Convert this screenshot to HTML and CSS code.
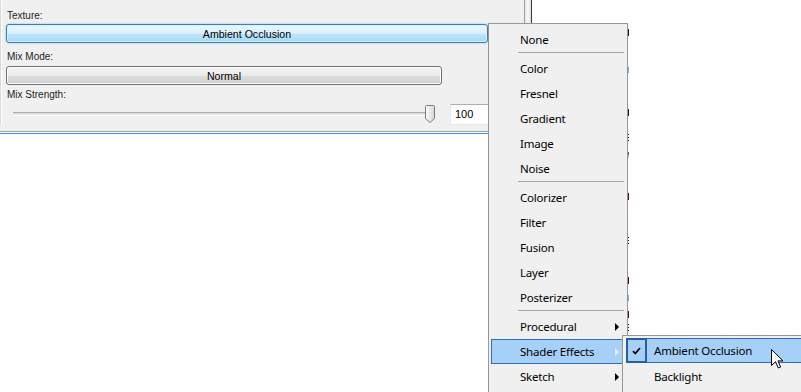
FILE: index.html
```html
<!DOCTYPE html>
<html lang="en">
<head>
  <meta charset="UTF-8">
  <title>Texture settings</title>
  <link rel="stylesheet" href="styles.css">
</head>
<body>
  <div class="top">
    <div class="panel">
      <div class="frame">
        <div class="label">Texture:</div>
        <button class="btn btn-focus">Ambient Occlusion</button>
        <div class="label label-gap">Mix Mode:</div>
        <button class="btn btn-normal">Normal</button>
        <div class="label">Mix Strength:</div>
        <div class="slider-row">
          <div class="slider">
            <div class="track"></div>
            <svg class="thumb" width="12" height="18" viewBox="0 0 12 18">
              <defs>
                <linearGradient id="tg" x1="0" y1="0" x2="1" y2="0">
                  <stop offset="0" stop-color="#fdfdfd"/>
                  <stop offset="1" stop-color="#d6d6d6"/>
                </linearGradient>
              </defs>
              <path d="M1.5 1.5 Q1.5 0.5 2.5 0.5 L9.5 0.5 Q10.5 0.5 10.5 1.5 L10.5 13.5 L6 17.5 L1.5 13.5 Z" fill="url(#tg)" stroke="#7a7a7a"/>
            </svg>
          </div>
          <div class="num">100</div>
        </div>
      </div>
    </div>
    <div class="strip"></div>
  </div>
  <div class="rule"></div>

  <div class="peek">
    <i class="red"></i><i class="blue"></i><i class="red"></i><i class="dots"></i><i class="mix"></i>
    <i class="red"></i><i class="dots"></i><i class="red"></i><i class="blue"></i><i class="red"></i><i class="dots"></i>
  </div>

  <div class="menu">
    <div class="item">None</div>
    <div class="sep"></div>
    <div class="item">Color</div>
    <div class="item">Fresnel</div>
    <div class="item">Gradient</div>
    <div class="item">Image</div>
    <div class="item">Noise</div>
    <div class="sep"></div>
    <div class="item">Colorizer</div>
    <div class="item">Filter</div>
    <div class="item">Fusion</div>
    <div class="item">Layer</div>
    <div class="item">Posterizer</div>
    <div class="sep"></div>
    <div class="item sub">Procedural</div>
    <div class="item sub active">Shader Effects</div>
    <div class="item sub">Sketch</div>
  </div>

  <div class="submenu">
    <div class="sub-item active">
      <span class="check">
        <svg width="9" height="8" viewBox="0 0 9 8"><path d="M1 4.2 L3.3 6.5 L8 1" fill="none" stroke="#000" stroke-width="1.7"/></svg>
      </span>
      Ambient Occlusion
    </div>
    <div class="sub-item"><span class="check blank"></span>Backlight</div>
  </div>

  <svg class="cursor" width="14" height="21" viewBox="0 0 14 21">
    <path d="M0.5 0.5 L0.5 16.5 L4.5 12.8 L7.3 19 L9.6 18 L6.9 11.9 L12 11.9 Z" fill="#fff" stroke="#000"/>
  </svg>
</body>
</html>
```

FILE: styles.css
```css
html,
body {
  margin: 0;
  width: 801px;
  height: 392px;
  overflow: hidden;
}

body {
  position: relative;
  background-color: #ffffff;
  font-family: 'Liberation Sans', Arial, sans-serif;
  color: #000000;
}

.top {
  display: flex;
  height: 131px;
}

.panel {
  width: 524px;
  background-color: #f0f0f0;
}

.frame {
  height: 125px;
  box-sizing: border-box;
  padding: 6px 0 0 6px;
  border-left: 1px solid #d9d9d9;
  box-shadow: inset 1px 0 #ffffff;
}

.label {
  font-size: 10px;
  line-height: 19px;
  height: 14px;
  color: #1e1e1e;
}

.label-gap {
  margin-top: 4px;
}

.btn {
  display: block;
  box-sizing: border-box;
  height: 19px;
  padding: 0;
  border-radius: 3px;
  font-family: 'Liberation Sans', Arial, sans-serif;
  font-size: 10.6px;
  color: #000000;
  text-align: center;
  margin-left: -1px;
}

.btn-focus {
  width: 482px;
  margin-top: 4px;
  border: 1px solid #3c7fb1;
  background: linear-gradient(#eaf6fd 0%, #d9f0fc 50%, #bee6fd 51%, #a7d9f5 100%);
  box-shadow: inset 0 0 0 1px #d6f0fb, 0 0 2px #6fb7e8;
}

.btn-normal {
  width: 436px;
  margin-top: 5px;
  border: 1px solid #707070;
  background: linear-gradient(#f2f2f2 0%, #ebebeb 50%, #dddddd 51%, #cfcfcf 100%);
  box-shadow: inset 0 0 0 1px #fcfcfc;
}

.slider-row {
  display: flex;
  margin-top: 4px;
  height: 22px;
}

.slider {
  position: relative;
  width: 431px;
}

.track {
  margin: 9px 0 0 6px;
  width: 420px;
  height: 2px;
  border-top: 1px solid #a9a9a9;
  background-color: #e2e2e2;
  border-bottom: 1px solid #ffffff;
}

.thumb {
  position: absolute;
  left: 417px;
  top: 2px;
}

.num {
  margin: 1px 0 0 12px;
  width: 70px;
  height: 21px;
  box-sizing: border-box;
  padding-left: 4px;
  background-color: #ffffff;
  border: 1px solid #e3e9ef;
  border-top-color: #abadb3;
  font-size: 11px;
  line-height: 19px;
}

.strip {
  width: 8px;
  box-sizing: border-box;
  border-left: 1px solid #a0a0a0;
  border-right: 1px solid #3a3a3a;
  background: linear-gradient(90deg, #e6e6e6, #fafafa 50%, #dcdcdc);
}

.rule {
  width: 531px;
  height: 1px;
  border-top: 1px solid #a0a0a0;
  border-bottom: 1px solid #3d95e0;
}

/* bits of the list that shows behind the menu */
.peek {
  position: absolute;
  left: 628px;
  top: 0;
  display: flex;
  flex-direction: column;
}

.peek i {
  display: block;
  width: 1px;
}

.peek .red { height: 7px; background-color: #4a0a0a; }
.peek .blue { height: 6px; background-color: #5ab4f0; }
.peek .dots { height: 9px; background: repeating-linear-gradient(#111 0 1px, #fff 1px 3px); }
.peek .mix { height: 6px; background: linear-gradient(#2d6fd0 50%, #f0c040 50%); }

.peek i:nth-child(1) { margin-top: 29px; }
.peek i:nth-child(2) { margin-top: 31px; }
.peek i:nth-child(3) { margin-top: 36px; }
.peek i:nth-child(4) { margin-top: 18px; }
.peek i:nth-child(5) { margin-top: 9px; }
.peek i:nth-child(6) { margin-top: 35px; }
.peek i:nth-child(7) { margin-top: 37px; }
.peek i:nth-child(8) { margin-top: 31px; }
.peek i:nth-child(9) { margin-top: 11px; }
.peek i:nth-child(10) { margin-top: 10px; }
.peek i:nth-child(11) { margin-top: 6px; }

.menu {
  position: absolute;
  left: 488px;
  top: 23px;
  width: 140px;
  height: 369px;
  overflow: hidden;
  box-sizing: border-box;
  padding: 3px 3px 0 2px;
  background-color: #f0f0f0;
  border: 1px solid #979797;
  border-bottom: none;
  font-family: 'Noto Sans', 'Open Sans', sans-serif;
  font-size: 11.5px;
  letter-spacing: -0.2px;
}

.item {
  position: relative;
  height: 25px;
  line-height: 26px;
  padding-left: 29px;
  box-sizing: border-box;
}

.sub::after {
  content: '';
  position: absolute;
  right: 5px;
  top: 9px;
  border-left: 4px solid #000000;
  border-top: 4px solid transparent;
  border-bottom: 4px solid transparent;
}

.item.active {
  background-color: #a6d0f7;
  border: 1px solid #2f6eb4;
  padding-left: 28px;
  line-height: 24px;
}

.item.active::after {
  right: 4px;
  top: 8px;
  border-left-color: #e6f2fd;
}

.sep {
  height: 4px;
  margin-left: 27px;
  border-top: 1px solid #a6a6a6;
  box-sizing: border-box;
}

.submenu {
  position: absolute;
  left: 622px;
  top: 335px;
  width: 179px;
  height: 57px;
  box-sizing: border-box;
  padding: 2px 0 0 3px;
  background-color: #f0f0f0;
  border: 1px solid #979797;
  border-right: none;
  border-bottom: none;
  font-family: 'Noto Sans', 'Open Sans', sans-serif;
  font-size: 11.5px;
  letter-spacing: -0.2px;
}

.sub-item {
  display: flex;
  align-items: center;
  height: 25px;
  padding-top: 2px;
  box-sizing: border-box;
}

.sub-item.active {
  background-color: #a6d0f7;
  border: 1px solid #2f6eb4;
  border-right: none;
  padding-top: 0;
}

.check {
  display: flex;
  align-items: center;
  justify-content: center;
  width: 21px;
  height: 25px;
  margin-right: 7px;
  box-sizing: border-box;
  flex-shrink: 0;
}

.sub-item.active .check {
  margin: -1px 7px -1px -1px;
  border: 2px solid #255fa3;
}

.check.blank {
  width: 20px;
  margin-right: 8px;
}

.cursor {
  position: absolute;
  left: 771px;
  top: 349px;
}
```
